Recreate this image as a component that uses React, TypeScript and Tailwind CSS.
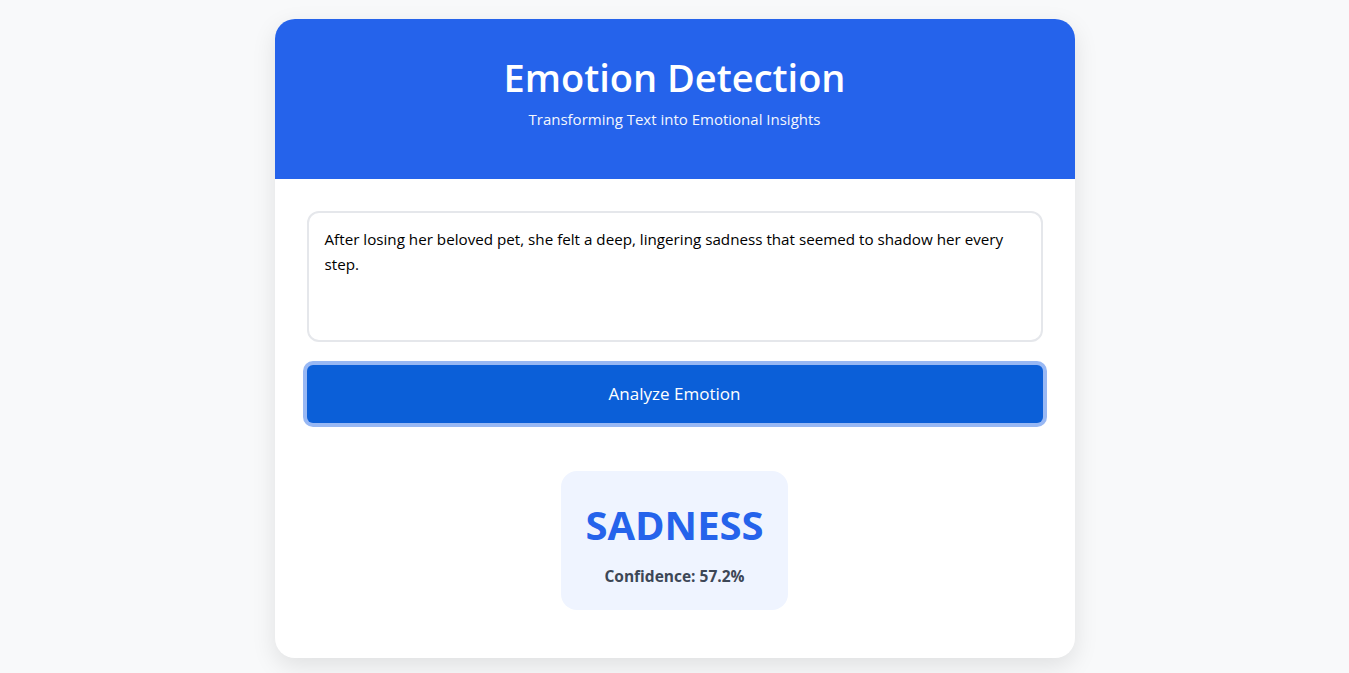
import React from 'react';

const App: React.FC = () => {
  return (
    <div className="min-h-screen bg-[#f8f9fa] pt-[19px] font-['Open_Sans',sans-serif]">
      <div className="mx-auto w-[800px] overflow-hidden rounded-[20px] bg-white shadow-[0_8px_24px_rgba(0,0,0,0.1)]">
        {/* Header */}
        <header className="flex h-[160px] flex-col items-center bg-[#2563eb] pt-[34px] text-white">
          <h1 className="text-[38px] font-semibold leading-[48px]">Emotion Detection</h1>
          <p className="mt-[6px] text-[15px] leading-6 opacity-95">Transforming Text into Emotional Insights</p>
        </header>

        <div className="px-8 pt-8 pb-12">
          <textarea
            className="block h-[131px] w-full resize-none rounded-xl border-2 border-[#e5e7eb] px-4 py-[14px] text-[15.2px] leading-[25px] text-black outline-none"
            defaultValue="After losing her beloved pet, she felt a deep, lingering sadness that seemed to shadow her every step."
          />

          <button className="mt-[23px] h-[58px] w-full rounded-md bg-[#0b5fd8] text-[17px] text-white ring-4 ring-[#98b8f4]">
            Analyze Emotion
          </button>

          <div className="mt-12 flex justify-center">
            <div className="rounded-2xl bg-[#eff4ff] px-6 pt-[30px] pb-[22px] text-center">
              <div className="text-[40px] font-bold leading-[48px] text-[#2563eb]">SADNESS</div>
              <div className="mt-[15px] text-[15.5px] font-bold leading-6 text-[#3d4756]">Confidence: 57.2%</div>
            </div>
          </div>
        </div>
      </div>
    </div>
  );
};

export default App;
